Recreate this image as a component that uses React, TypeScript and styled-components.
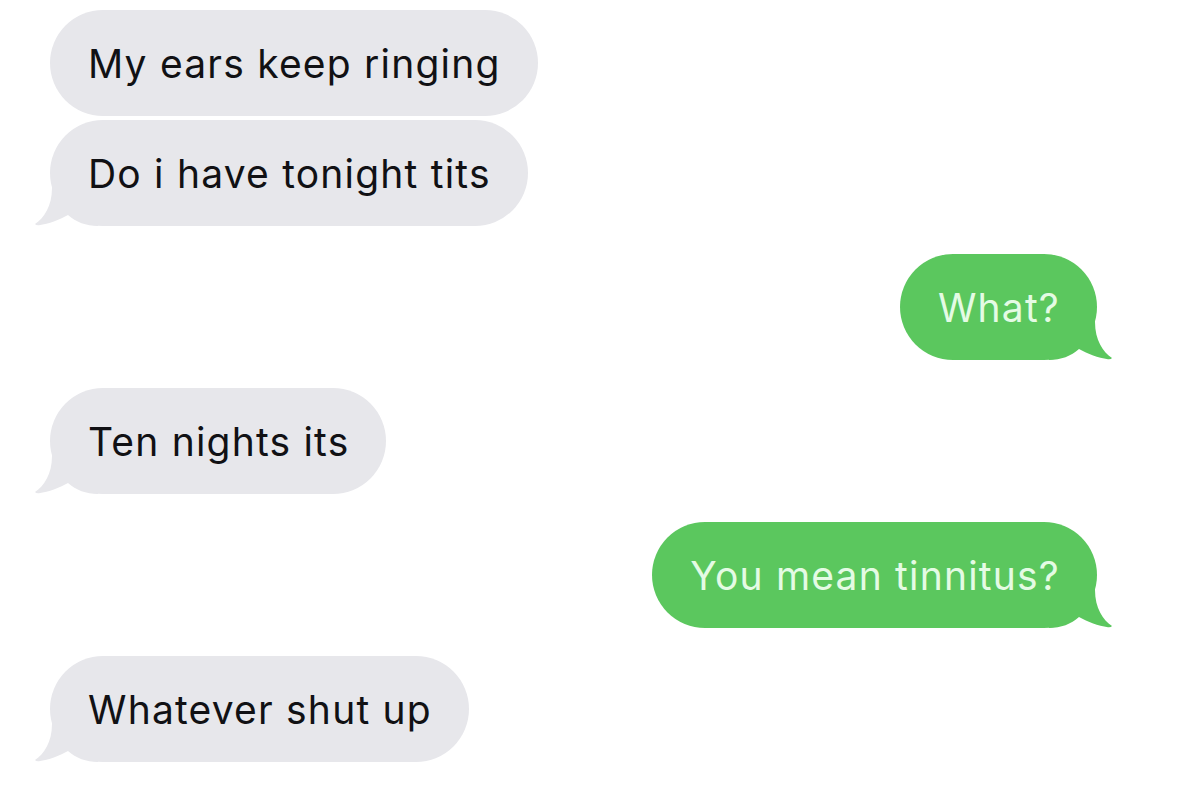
import styled, { createGlobalStyle } from "styled-components";

const GlobalStyle = createGlobalStyle`
  html, body {
    margin: 0;
    padding: 0;
    background: #ffffff;
  }
  body {
    font-family: Inter, "Liberation Sans", Arial, sans-serif;
  }
`;

type Side = "them" | "me";

interface Message {
  id: number;
  side: Side;
  text: string;
  tail?: boolean;
}

const messages: Message[] = [
  { id: 1, side: "them", text: "My ears keep ringing" },
  { id: 2, side: "them", text: "Do i have tonight tits", tail: true },
  { id: 3, side: "me", text: "What?", tail: true },
  { id: 4, side: "them", text: "Ten nights its", tail: true },
  { id: 5, side: "me", text: "You mean tinnitus?", tail: true },
  { id: 6, side: "them", text: "Whatever shut up", tail: true },
];

const colors = {
  them: { bg: "#e7e7eb", fg: "#111114" },
  me: { bg: "#5bc75e", fg: "#e4fbe4" },
};

const Thread = styled.main`
  display: flex;
  flex-direction: column;
  padding: 10px 103px 0 50px;
  min-height: 806px;
  box-sizing: border-box;
`;

const Row = styled.div<{ $side: Side; $gap: number }>`
  display: flex;
  justify-content: ${(p) => (p.$side === "me" ? "flex-end" : "flex-start")};
  margin-top: ${(p) => p.$gap}px;
`;

const Bubble = styled.div<{ $side: Side }>`
  position: relative;
  box-sizing: border-box;
  height: 106px;
  display: flex;
  align-items: center;
  padding: 0 37px 0 38px;
  border-radius: 53px;
  background: ${(p) => colors[p.$side].bg};
  color: ${(p) => colors[p.$side].fg};
  font-size: 39px;
  letter-spacing: 1.2px;
  white-space: nowrap;
`;

const Label = styled.span`
  position: relative;
`;

const Tail = styled.svg<{ $side: Side }>`
  position: absolute;
  bottom: 0;
  width: 70px;
  height: 60px;
  overflow: visible;
  ${(p) => (p.$side === "me" ? "right: 0; transform: scaleX(-1);" : "left: 0;")}
  fill: ${(p) => colors[p.$side].bg};
`;

// bubble tail, drawn from the bottom-left corner; mirrored for sent messages
const TailShape = ({ side }: { side: Side }) => (
  <Tail $side={side} viewBox="0 0 70 60">
    <path d="M2 0 L2 22 C2 40 -6 52 -15 58 Q-14 59.5 -11 59.2 C-1 58 9 54 18 49 C26 56 36 60 48 60 L48 0 Z" />
  </Tail>
);

export default function App() {
  return (
    <>
      <GlobalStyle />
      <Thread>
        {messages.map((m, i) => {
          const prev = messages[i - 1];
          const gap = !prev ? 0 : prev.side === m.side ? 4 : 28;
          return (
            <Row key={m.id} $side={m.side} $gap={gap}>
              <Bubble $side={m.side}>
                {m.tail && <TailShape side={m.side} />}
                <Label>{m.text}</Label>
              </Bubble>
            </Row>
          );
        })}
      </Thread>
    </>
  );
}
